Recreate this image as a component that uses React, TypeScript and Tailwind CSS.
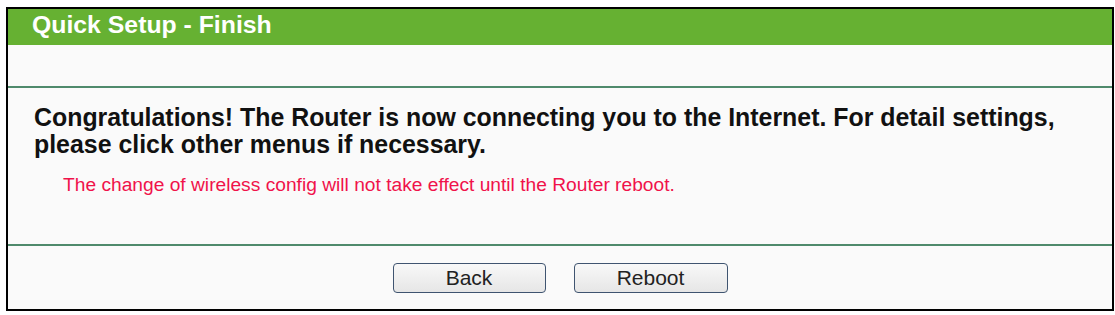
export default function App() {
  return (
    <div className="min-h-[315px] w-[1115px] bg-white pl-[6px] pt-[7px]" style={{ fontFamily: '"Liberation Sans", Arial, sans-serif' }}>
      <div className="flex h-[304px] w-[1108px] flex-col border-2 border-black bg-[#fafafa]">
        <div className="h-[36px] bg-[#66b132] pl-[24px] text-[24.8px] font-bold leading-[32px] text-white">
          Quick Setup - Finish
        </div>
        <div className="h-[41px]" />
        <div className="h-[2px] bg-[#4f8a6c]" />
        <div className="flex h-[156px] flex-col pl-[26px] pt-[16px]">
          <p className="text-[24.9px] font-bold leading-[27px] text-[#111]">
            Congratulations! The Router is now connecting you to the Internet. For detail settings,
            <br />
            please click other menus if necessary.
          </p>
          <p className="mt-[16px] pl-[29px] text-[19.2px] leading-[22px] text-[#f0124a]">
            The change of wireless config will not take effect until the Router reboot.
          </p>
        </div>
        <div className="h-[2px] bg-[#4f8a6c]" />
        <div className="flex flex-1 justify-center gap-[28px] pt-[17px]">
          <button className="h-[30px] w-[153px] rounded-[4px] border border-[#3f5470] bg-gradient-to-b from-[#f8f8f8] to-[#e6e6e6] text-[21px] leading-[28px] text-[#222]">
            Back
          </button>
          <button className="h-[30px] w-[154px] rounded-[4px] border border-[#3f5470] bg-gradient-to-b from-[#f8f8f8] to-[#e6e6e6] text-[21px] leading-[28px] text-[#222]">
            Reboot
          </button>
        </div>
      </div>
    </div>
  );
}
